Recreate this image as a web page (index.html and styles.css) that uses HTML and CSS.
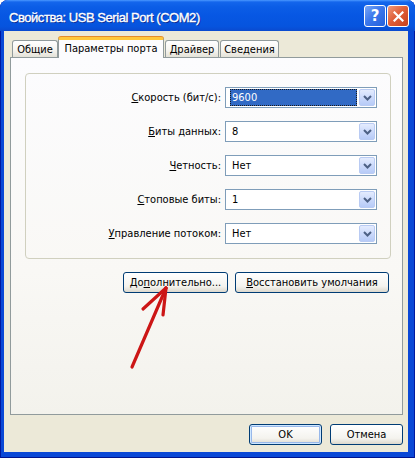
FILE: index.html
```html
<!DOCTYPE html>
<html lang="ru">
<head>
<meta charset="utf-8">
<title>Свойства: USB Serial Port (COM2)</title>
<link rel="stylesheet" href="styles.css">
</head>
<body>
<div class="window">
  <div class="titlebar">
    <span class="title">Свойства: USB Serial Port (COM2)</span>
    <div class="tb-buttons">
      <span class="tb-btn help">?</span>
      <span class="tb-btn close"><svg width="11" height="11" viewBox="0 0 11 11"><path d="M1.5 1.5 L9.5 9.5 M9.5 1.5 L1.5 9.5" stroke="#fff" stroke-width="2.2" stroke-linecap="square"/></svg></span>
    </div>
  </div>
  <div class="client">
    <div class="tabs">
      <div class="tab t1">Общие</div>
      <div class="tab t2 active">Параметры порта</div>
      <div class="tab t3">Драйвер</div>
      <div class="tab t4">Сведения</div>
    </div>
    <div class="panel">
      <div class="group">
        <label class="lbl"><u>С</u>корость (бит/с):</label>
        <div class="combo"><span class="value selected">9600</span><span class="arrow"><svg width="9" height="6" viewBox="0 0 9 6"><path d="M1 1 L4.5 4.5 L8 1" fill="none" stroke="#4D6185" stroke-width="2"/></svg></span></div>
        <label class="lbl"><u>Б</u>иты данных:</label>
        <div class="combo"><span class="value">8</span><span class="arrow"><svg width="9" height="6" viewBox="0 0 9 6"><path d="M1 1 L4.5 4.5 L8 1" fill="none" stroke="#4D6185" stroke-width="2"/></svg></span></div>
        <label class="lbl"><u>Ч</u>етность:</label>
        <div class="combo"><span class="value">Нет</span><span class="arrow"><svg width="9" height="6" viewBox="0 0 9 6"><path d="M1 1 L4.5 4.5 L8 1" fill="none" stroke="#4D6185" stroke-width="2"/></svg></span></div>
        <label class="lbl"><u>С</u>топовые биты:</label>
        <div class="combo"><span class="value">1</span><span class="arrow"><svg width="9" height="6" viewBox="0 0 9 6"><path d="M1 1 L4.5 4.5 L8 1" fill="none" stroke="#4D6185" stroke-width="2"/></svg></span></div>
        <label class="lbl"><u>У</u>правление потоком:</label>
        <div class="combo"><span class="value">Нет</span><span class="arrow"><svg width="9" height="6" viewBox="0 0 9 6"><path d="M1 1 L4.5 4.5 L8 1" fill="none" stroke="#4D6185" stroke-width="2"/></svg></span></div>
      </div>
      <div class="actions">
        <button class="btn b-adv">До<u>п</u>олнительно...</button>
        <button class="btn b-def"><u>В</u>осстановить умолчания</button>
      </div>
    </div>
    <div class="footer">
      <button class="btn b-ok default">OK</button>
      <button class="btn b-cancel">Отмена</button>
    </div>
  </div>
  <svg class="mark" width="415" height="458" viewBox="0 0 415 458">
    <g stroke="#CC1616" stroke-width="3.2" stroke-linecap="round" fill="none">
      <path d="M132 367 L166 288"/>
      <path d="M166 288 L143 309"/>
      <path d="M166 288 L163 315"/>
    </g>
  </svg>
</div>
</body>
</html>
```
FILE: styles.css
```css
html, body {
  margin: 0;
  padding: 0;
  background: #ffffff;
}
body {
  font-family: "DejaVu Sans Condensed", "DejaVu Sans", sans-serif;
  font-size: 11px;
  color: #000;
}
.window {
  position: relative;
  width: 415px;
  height: 458px;
  display: flex;
  flex-direction: column;
  background: #0A48D6;
  border-radius: 8px 8px 0 0;
  overflow: hidden;
  box-shadow: inset 1px 0 #0019A0, inset -1px 0 #0019A0, inset 0 -1px #00138C;
}
.titlebar {
  height: 31px;
  flex: none;
  display: flex;
  align-items: center;
  padding-left: 9px;
  background: linear-gradient(#4A98FF 0, #1466EC 2px, #0B5DE6 7px, #0757E3 50%, #0654DE 85%, #0A4ACF 100%);
  color: #fff;
  box-sizing: border-box;
}
.title {
  font-family: "Liberation Sans", sans-serif;
  font-weight: normal;
  font-size: 13px;
  letter-spacing: -0.45px;
  -webkit-text-stroke: 0.35px #fff;
  padding-top: 3px;
  text-shadow: 1px 1px 0 #0A2A8E;
  flex: 1;
  white-space: nowrap;
}
.tb-buttons {
  display: flex;
  gap: 1px;
  margin-right: 6px;
  margin-top: 1px;
}
.tb-btn {
  width: 22px;
  height: 22px;
  box-sizing: border-box;
  border: 1px solid #fff;
  border-radius: 3px;
  display: flex;
  align-items: center;
  justify-content: center;
}
.help {
  background: linear-gradient(135deg, #7AA7F5 0, #3C78EC 45%, #2460DC 100%);
  font-family: "DejaVu Sans", sans-serif;
  font-weight: bold;
  font-size: 15px;
  color: #fff;
}
.close {
  background: linear-gradient(135deg, #EE9A7C 0, #E0603A 45%, #C8401C 100%);
}
.client {
  flex: 1;
  margin: 0 7px 6px 4px;
  background: #ECE9D8;
  display: flex;
  flex-direction: column;
  padding: 6px 0 7px 0;
  box-sizing: border-box;
}
.tabs {
  display: flex;
  align-items: flex-end;
  height: 20px;
  padding-left: 8px;
  position: relative;
  z-index: 1;
}
.tab {
  height: 17px;
  box-sizing: border-box;
  border: 1px solid #919B9C;
  border-bottom: none;
  border-radius: 3px 3px 0 0;
  background: linear-gradient(#FFFFFF, #F6F5F0 55%, #E4E2D8);
  display: flex;
  align-items: center;
  justify-content: center;
  white-space: nowrap;
}
.t1 { width: 46px; }
.t2 { width: 106px; }
.t3 { width: 54px; margin-left: 1px; }
.t4 { width: 59px; margin-left: 1px; }
.tab.active {
  height: 21px;
  margin-bottom: -1px;
  background: #FCFCFE;
  border-top: 3px solid #FFC83C;
  box-shadow: 0 -1px 0 #E68B2C;
  align-items: flex-start;
  padding-top: 2px;
}
.panel {
  flex: 1;
  margin: 0 5px 0 6px;
  border: 1px solid #919B9C;
  background: linear-gradient(#FCFCFE, #F9F8F5 60%, #F3F2EC);
  display: flex;
  flex-direction: column;
  padding: 15px 11px 0 14px;
}
.group {
  border: 1px solid #D0D0BF;
  border-radius: 4px;
  padding: 13px 13px 14px 0;
  display: grid;
  grid-template-columns: 1fr 152px;
  column-gap: 4px;
  row-gap: 13px;
  align-items: center;
}
.lbl {
  text-align: right;
  white-space: nowrap;
}
.combo {
  height: 21px;
  box-sizing: border-box;
  border: 1px solid #7F9DB9;
  background: #fff;
  display: flex;
  padding: 1px;
  gap: 2px;
}
.value {
  flex: 1;
  margin-left: 3px;
  height: 17px;
  line-height: 17px;
  padding-left: 2px;
  box-sizing: border-box;
}
.value.selected {
  background: #316AC5;
  color: #fff;
  outline: 1px dotted #1A1A1A;
  outline-offset: -1px;
}
.arrow {
  width: 16px;
  height: 17px;
  box-sizing: border-box;
  border: 1px solid #B9CBF3;
  border-radius: 2px;
  background: linear-gradient(#E4ECFE, #CCDAFB 50%, #B7CBF7);
  display: flex;
  align-items: center;
  justify-content: center;
}
.actions {
  display: flex;
  justify-content: flex-end;
  gap: 7px;
  margin-top: 13px;
  padding-right: 2px;
}
.btn {
  height: 21px;
  box-sizing: border-box;
  border: 1px solid #003C74;
  border-radius: 3px;
  background: linear-gradient(#FFFFFF, #F4F3EE 70%, #DCD8CD);
  font: inherit;
  color: #000;
  padding: 0;
  white-space: nowrap;
}
.b-adv { width: 105px; }
.b-def { width: 154px; }
.b-ok, .b-cancel { width: 73px; }
.btn.default {
  box-shadow: inset 0 0 0 1px #CEE7FF, inset 0 0 0 2px #98B8EA;
}
.footer {
  display: flex;
  justify-content: flex-end;
  gap: 8px;
  margin-top: 9px;
  padding-right: 5px;
}
.mark {
  position: absolute;
  left: 0;
  top: 0;
  pointer-events: none;
}
```
